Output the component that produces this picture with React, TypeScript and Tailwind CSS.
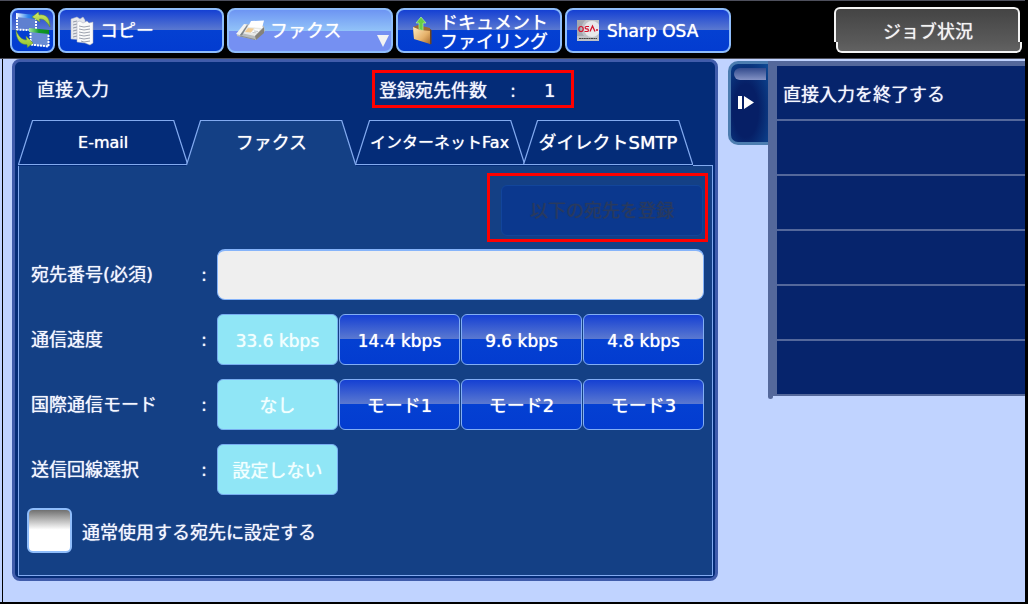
import { useState } from "react";
import type { ReactNode } from "react";

const GLOSS =
  "bg-[linear-gradient(to_bottom,#1540d3_0%,#5b79d0_49%,#0440d2_50%,#033cd0_100%)]";
const GLOSS_ACTIVE =
  "bg-[linear-gradient(to_bottom,#6d95f3_0%,#92c3f8_51%,#7590f2_52%,#7590f2_100%)]";

function SwitchIcon() {
  return (
    <svg viewBox="0 0 36 38" className="h-[38px] w-9" aria-hidden="true">
      <defs>
        <linearGradient id="bar" x1="0" x2="1">
          <stop offset="0" stopColor="#fff" />
          <stop offset="0.6" stopColor="#2f86ee" />
          <stop offset="1" stopColor="#0b5fd2" />
        </linearGradient>
        <linearGradient id="greenbar" x1="0" x2="1">
          <stop offset="0" stopColor="#a6e8a0" />
          <stop offset="0.5" stopColor="#0f9a26" />
          <stop offset="1" stopColor="#0b8a20" />
        </linearGradient>
        <linearGradient id="leaf" x1="0" y1="0" x2="0" y2="1">
          <stop offset="0" stopColor="#d5ec6c" />
          <stop offset="1" stopColor="#8fbf2a" />
        </linearGradient>
      </defs>
      <path d="M1 3l20 2v14L1 17z" fill="#5f80d0" />
      <path d="M2 5v12.500l19 1V7" fill="none" stroke="#fff" strokeWidth="2" strokeDasharray="2 1" />
      <path d="M1 1l20 2v4L1 5z" fill="url(#bar)" />
      <path d="M15 19l19 2v14l-19-2z" fill="#6a8dd4" />
      <path d="M15.500 21v11.500l18 2V22" fill="none" stroke="#fff" strokeWidth="2" strokeDasharray="2 1" />
      <path d="M14 16l20 2v4l-20-2z" fill="url(#greenbar)" />
      <path d="M35 15C35 6 31 2 24 3L23.500 0 17 5l8 5-.5-3C29 6.500 32 10 35 15z" fill="url(#leaf)" stroke="#5a8a2c" strokeWidth="0.500" />
      <path d="M1 18C1 27 5 33 12 32.500l.5 3L18 31l-7-7 .5 4C7 28 3 24 1 18z" fill="url(#leaf)" stroke="#5a8a2c" strokeWidth="0.500" />
    </svg>
  );
}

function CopyIcon() {
  return (
    <svg viewBox="0 0 24 30" className="h-[30px] w-6 shrink-0" aria-hidden="true">
      <path d="M1 3l3-1 3-1 3 2 3-2 2 3v20L1 23z" fill="#e6e8ec" stroke="#b0b7c7" strokeWidth="0.500" />
      <path d="M3 6l4-1M3 9l4-1M3 12l4-1M3 15l4-1M3 18l4-1M3 21l4-1" stroke="#8a91a0" strokeWidth="0.900" />
      <path d="M7 6l3-1 3 2 4-2 2 2 4-1v21l-3 2-5-2-8-1z" fill="#fafafa" stroke="#a4abbd" strokeWidth="0.500" />
      <path d="M9 10l5 1 6-1M9 13l5 1 6-1M9 16l5 1 6-1M9 19l5 1 6-1M9 22l5 1 6-1M11 25l3 1 6-1" fill="none" stroke="#858c9a" strokeWidth="0.800" />
    </svg>
  );
}

function FaxIcon() {
  return (
    <svg viewBox="0 0 30 22" className="h-[22px] w-[30px] shrink-0" aria-hidden="true">
      <path d="M1 14L9 4l19 2 1 5-9 9L1 16z" fill="#b9bcbc" />
      <path d="M5 13L11 5l17 2-9 9z" fill="#e9eae8" />
      <path d="M0 14L8 4l3 .5L4 15z" fill="#f3f3f1" />
      <path d="M4 15l7-10 1 .5-6 10z" fill="#7f868a" />
      <path d="M19 16l9-9v6l-8 7z" fill="#85827a" />
      <path d="M12 7l3-6 13-.500L26 8z" fill="#fff" />
      <path d="M12 8l6 .5-3 4-6-.5z" fill="#f3cd92" />
      <path d="M19 9l5 .5-4 4-5-.5z" fill="#fff" />
      <path d="M18 11l4 .4M16.500 12.500l4 .4" stroke="#92999d" strokeWidth="0.600" />
      <path d="M4 16l15 3.500" fill="none" stroke="#8a8f92" />
    </svg>
  );
}

function FilingIcon() {
  return (
    <svg viewBox="0 0 20 28" className="h-7 w-5 shrink-0" aria-hidden="true">
      <defs>
        <linearGradient id="folder" x1="0" y1="0" x2="1" y2="1">
          <stop offset="0" stopColor="#ffebc0" />
          <stop offset="0.6" stopColor="#e6b26b" />
          <stop offset="1" stopColor="#a86d31" />
        </linearGradient>
      </defs>
      <path d="M18 12l1.500 1v14l-2 .5z" fill="#6d4520" />
      <path d="M1 10l5-2 12 3v13L2 22z" fill="#9b6a34" />
      <path d="M7 12V6H4l5-6 5 6h-3v8z" fill="#67cd45" stroke="#b5f29e" strokeWidth="0.700" />
      <path d="M1 10l5 2 2 1 10 1v13L2 22z" fill="url(#folder)" />
    </svg>
  );
}

function OsaIcon() {
  return (
    <svg viewBox="0 0 22 21" className="h-[21px] w-[22px] shrink-0" aria-hidden="true">
      <rect width="22" height="21" fill="#bfc2c7" />
      <circle cx="15" cy="9" r="8" fill="#e8e8ea" />
      <path d="M0 0h9a11 11 0 0 0-2 16H0z" fill="#a5a9b1" />
      <ellipse cx="4" cy="9" rx="2.200" ry="2.500" fill="none" stroke="#d3122c" strokeWidth="1.200" />
      <path d="M12 6.500H9.200c-1.400 0-1.400 2.300 0 2.300h1c1.600 0 1.600 2.700 0 2.700H7.500" fill="none" stroke="#d3122c" strokeWidth="1.200" />
      <path d="M13 11.500l2.500-5.500 2.500 5.500" fill="none" stroke="#d3122c" strokeWidth="1.300" />
      <circle cx="20" cy="10" r="1" fill="#d3122c" />
      <path d="M2 18.500h18" stroke="#444" strokeWidth="1.200" strokeDasharray="2 .4" />
    </svg>
  );
}

type ModeProps = { icon: ReactNode; children: ReactNode; active?: boolean; pad: string };

function ModeButton({ icon, children, active, pad }: ModeProps) {
  return (
    <button
      type="button"
      aria-pressed={!!active}
      className={`relative flex h-[45px] min-w-0 items-center rounded-lg border-2 border-[#8fbdfb] text-left text-lg leading-[18px] whitespace-nowrap text-white ${pad} ${active ? GLOSS_ACTIVE : GLOSS}`}
    >
      {icon}
      {children}
      {active && (
        <svg viewBox="0 0 12 12" className="absolute right-0.5 bottom-1 h-3 w-3" aria-hidden="true">
          <path d="M0 0h12L6 12z" fill="#f3f3f3" />
        </svg>
      )}
    </button>
  );
}

type TabProps = { label: string; small?: boolean; active: boolean; onSelect: () => void };

function Tab({ label, small, active, onSelect }: TabProps) {
  return (
    <button
      type="button"
      role="tab"
      aria-selected={active}
      onClick={onSelect}
      className={`relative -mr-0.5 h-[46px] min-w-0 flex-1 whitespace-nowrap text-white ${small ? "text-base" : "text-lg"} ${active ? "z-10" : ""}`}
    >
      <svg
        viewBox="0 0 170 46"
        preserveAspectRatio="none"
        className="absolute inset-0 h-full w-full"
        aria-hidden="true"
      >
        <path d="M0 46L14.500 .5h141L170 46z" fill={active ? "#144085" : "#042c78"} />
        <path
          d={active ? "M.5 45L14.500 .5h141L169.500 45" : "M.5 44.500L14.500 .5h141L169.500 44.500z"}
          fill="none"
          stroke="#82aaf0"
          strokeWidth="1.200"
        />
      </svg>
      <span className="relative">{label}</span>
    </button>
  );
}

function Row({ label, htmlFor, children }: { label: string; htmlFor?: string; children: ReactNode }) {
  const Label = htmlFor ? "label" : "span";
  return (
    <div className="flex h-[51px] items-center pr-2 pl-3">
      <div className="flex w-[186px] shrink-0 items-center">
        <Label {...(htmlFor ? { htmlFor } : {})} className="w-[170px]">
          {label}
        </Label>
        <span>:</span>
      </div>
      {children}
    </div>
  );
}

function Options({ name, items }: { name: string; items: string[] }) {
  const [chosen, setChosen] = useState(0);
  return (
    <div role="group" aria-label={name} className="grid h-full flex-1 grid-cols-4 gap-px">
      {items.map((item, i) => (
        <button
          key={item}
          type="button"
          aria-pressed={i === chosen}
          onClick={() => setChosen(i)}
          className={`rounded-md border pt-0.5 whitespace-nowrap ${/^\d/.test(item) ? "text-[17px]" : "text-lg"} ${
            i === chosen ? "border-[#78aef0] bg-[#90e6f6] text-[#f2ffff]" : `border-[#82aef5] text-white ${GLOSS}`
          }`}
        >
          {item}
        </button>
      ))}
    </div>
  );
}

const TABS = ["E-mail", "ファクス", "インターネットFax", "ダイレクトSMTP"];
const ACTIONS = ["直接入力を終了する", "", "", "", "", ""];

export default function App() {
  const [tab, setTab] = useState(1);
  return (
    <div className="flex min-h-screen flex-col border-r-3 border-b-2 border-black bg-[#c0d3ff] font-['DejaVu_Sans','Noto_Sans_CJK_JP',sans-serif] text-lg leading-6 text-[#f4f6ff] [text-shadow:0_0_1px_currentColor] [&_button]:[text-shadow:0_0_1px_currentColor]">
      <header className="flex h-[59px] items-start border-t border-b border-[#4d4f5c] bg-black pt-[7px] pr-[3px] pl-2.5">
        <nav className="mr-[103px] flex flex-1 gap-[3px]">
          <button
            type="button"
            aria-label="モード切替"
            className={`flex h-[45px] w-[45px] shrink-0 items-center justify-center rounded-lg border-2 border-[#8fbdfb] ${GLOSS}`}
          >
            <SwitchIcon />
          </button>
          <div className="grid flex-1 grid-cols-4 gap-[3px]">
            <ModeButton icon={<CopyIcon />} pad="gap-1.5 pl-2.5">
              コピー
            </ModeButton>
            <ModeButton icon={<FaxIcon />} active pad="gap-1 pl-[7px]">
              ファクス
            </ModeButton>
            <ModeButton icon={<FilingIcon />} pad="gap-2 pl-3.5">
              <span className="pt-0.5 leading-[19px]">
                ドキュメント
                <br />
                ファイリング
              </span>
            </ModeButton>
            <ModeButton icon={<OsaIcon />} pad="gap-2 pl-2.5">
              <span className="text-[17px]">Sharp OSA</span>
            </ModeButton>
          </div>
        </nav>
        <button type="button" className="relative -mt-px h-[46px] w-[188px] shrink-0 pt-1 text-lg text-[#f4f4f4]">
          <span className="absolute top-0 right-0.5 left-0 h-[35px] rounded-t-md border-2 border-b-0 border-[#f4f4f4] bg-linear-to-b from-[#444] to-[#5a5a5a]" />
          <span className="absolute right-0 bottom-0 left-0.5 h-[11px] rounded-b-md border-2 border-t-0 border-[#f4f4f4] bg-linear-to-b from-[#5a5a5a] to-[#626262]" />
          <span className="relative">ジョブ状況</span>
        </button>
      </header>

      <div className="ml-0.5 flex flex-1 items-start border-l border-black">
        <main className="mr-2.5 mb-[21px] ml-[9px] flex-1 rounded-lg border-3 border-[#405cab] bg-[#042c78] pr-0.5 pb-0.5 pl-[3px]">
          <div className="flex h-[58px] items-start pt-2">
            <h1 className="w-[354px] pt-2 pl-[19px]">直接入力</h1>
            <p className="flex h-[38px] w-[202px] items-center border-3 border-[#f00] pt-1 pl-1">
              <span className="w-[131px]">登録宛先件数</span>
              <span className="w-[34px]">:</span>
              <span>1</span>
            </p>
          </div>

          <div role="tablist" className="-mb-px flex pr-[22px]">
            {TABS.map((label, i) => (
              <Tab
                key={label}
                label={label}
                small={i === 0 || i === 2}
                active={i === tab}
                onSelect={() => setTab(i)}
              />
            ))}
          </div>

          <form className="flex flex-col border border-[#82aaf0] bg-[#144085] pt-[7px] pb-[22px]">
            <div className="mr-1 mb-[7px] flex h-[69px] w-[221px] self-end border-3 border-[#f00] pt-[9px] pr-0.5 pb-[3px] pl-[11px]">
              <button
                type="button"
                disabled
                className="flex-1 rounded-md border border-[#12459b] bg-[#0b388e] text-[#293a5e]"
              >
                以下の宛先を登録
              </button>
            </div>
            <div className="flex flex-col gap-3.5">
              <Row label="宛先番号(必須)" htmlFor="number">
                <input
                  id="number"
                  type="text"
                  className="h-full min-w-0 flex-1 rounded-lg border border-t-2 border-[#86b4fa] bg-[#efefef] px-3 text-black"
                />
              </Row>
              <Row label="通信速度">
                <Options name="通信速度" items={["33.6 kbps", "14.4 kbps", "9.6 kbps", "4.8 kbps"]} />
              </Row>
              <Row label="国際通信モード">
                <Options name="国際通信モード" items={["なし", "モード1", "モード2", "モード3"]} />
              </Row>
              <Row label="送信回線選択">
                <Options name="送信回線選択" items={["設定しない"]} />
              </Row>
            </div>
            <label className="mt-[13px] flex items-center gap-2.5 pl-2">
              <input
                type="checkbox"
                className="h-[45px] w-[45px] appearance-none rounded-md border-2 border-[#8fbdfb] bg-[linear-gradient(to_bottom,#707070_0%,#fff_48%)]"
              />
              <span className="pt-1">通常使用する宛先に設定する</span>
            </label>
          </form>
        </main>

        <aside className="mt-0.5 flex w-[297px] shrink-0 items-start">
          <button
            type="button"
            aria-label="パネルを閉じる"
            className="flex h-[84px] w-10 flex-col items-center rounded-l-[10px] border-3 border-r-0 border-[#4c7db0] bg-[radial-gradient(ellipse_at_40%_60%,#061f66_40%,#0e4b96_100%)] pt-1"
          >
            <span className="h-3 w-8 rounded-l-full bg-linear-to-b from-[#334a8c] to-[#8593c5]" />
            <svg viewBox="0 0 16 14" className="mt-4 mr-2 h-3.5 w-4" aria-hidden="true">
              <path d="M0 0h4v13H0zM6 0l10 6.500L6 13z" fill="#fff" />
            </svg>
          </button>
          <div className="flex-1">
            <ul className="flex flex-col gap-0.5 border-t-5 border-b-2 border-l-9 border-[#54689b] bg-[#54689b]">
              {ACTIONS.map((action, i) => (
                <li key={i} className="h-[53px] bg-[#06246c]">
                  <button type="button" className="h-full w-full pt-1 pl-1.5 text-left" disabled={!action}>
                    {action}
                  </button>
                </li>
              ))}
            </ul>
            <div className="h-[3px] w-[5px] rounded-b bg-[#54689b]" />
          </div>
        </aside>
      </div>
    </div>
  );
}
